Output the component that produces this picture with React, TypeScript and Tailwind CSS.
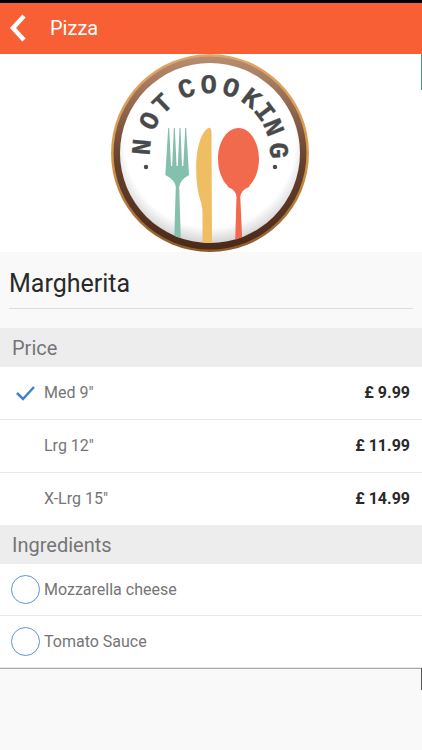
const sizes = [
  { id: "med", label: 'Med 9"', price: "£ 9.99" },
  { id: "lrg", label: 'Lrg 12"', price: "£ 11.99" },
  { id: "xlrg", label: 'X-Lrg 15"', price: "£ 14.99" },
];

const ingredients = ["Mozzarella cheese", "Tomato Sauce"];

// letters around the badge, with their angle in degrees from the top
const badgeLetters = [
  { char: "N", angle: -85 },
  { char: "O", angle: -62 },
  { char: "T", angle: -44 },
  { char: "C", angle: -20 },
  { char: "O", angle: -1 },
  { char: "O", angle: 18 },
  { char: "K", angle: 37 },
  { char: "I", angle: 53 },
  { char: "N", angle: 68 },
  { char: "G", angle: 88 },
];

function Logo() {
  return (
    <svg viewBox="0 0 198 198" className="w-[198px] h-[198px]" role="img" aria-label="Not Cooking">
      <defs>
        <linearGradient id="rim" x1="0" y1="0" x2="0" y2="1">
          <stop offset="0" stopColor="#b98d70" />
          <stop offset="0.25" stopColor="#94694f" />
          <stop offset="0.55" stopColor="#65402c" />
          <stop offset="1" stopColor="#4c2a19" />
        </linearGradient>
        <linearGradient id="edge" x1="0" y1="0" x2="0" y2="1">
          <stop offset="0" stopColor="#e0a568" />
          <stop offset="0.5" stopColor="#d99b4c" />
          <stop offset="1" stopColor="#8a5a2c" />
        </linearGradient>
        <radialGradient id="plate" cx="0.5" cy="0.44" r="0.57">
          <stop offset="0" stopColor="#ffffff" />
          <stop offset="0.83" stopColor="#ffffff" />
          <stop offset="1" stopColor="#cfcfcf" />
        </radialGradient>
        <clipPath id="inside">
          <circle cx="99" cy="99" r="90" />
        </clipPath>
      </defs>
      <circle cx="99" cy="99" r="99" fill="url(#edge)" />
      <circle cx="99" cy="99" r="96.5" fill="url(#rim)" />
      <circle cx="99" cy="99" r="90" fill="url(#plate)" />
      <g clipPath="url(#inside)">
        <path
          d="M57.2 74 H58.2 L60 112 H61.2 L62.8 74 H63.8 L65.6 112 H66.8 L68.5 74 H69.5 L71 112 H72.3 L74.2 74 H75.2 L78 121 Q69 126 68.2 133 L70 192 H63 L64.8 133 Q64 126 54.3 121 Z"
          fill="#85bfad"
        />
        <path d="M97 74 Q100.5 73 100.5 79 L101 192 H91.5 V158 Q91.5 153 89 145 C83 126 83 84 97 74 Z" fill="#f0be62" />
        <path
          d="M127.3 74 C139 74 148 88 148 105 C148 116 144 126 139 131 L138 133 Q130 136 129.3 143 L131.5 192 H124 L125.5 143 Q125 136 117 133 L116 131 C111 126 107 116 107 105 C107 88 116 74 127.3 74 Z"
          fill="#f26a4d"
        />
      </g>
      <g
        className="font-['Liberation_Mono',monospace] font-bold text-[27px]"
        fill="#47494b"
        stroke="#47494b"
        strokeWidth="0.3"
        textAnchor="middle"
      >
        {badgeLetters.map(({ char, angle }) => (
          <text key={angle} x="99" y="39" transform={`rotate(${angle} 99 99)`}>
            {char}
          </text>
        ))}
      </g>
      <circle cx="35" cy="113" r="2.2" fill="#47494b" />
      <circle cx="164" cy="113" r="2.2" fill="#47494b" />
    </svg>
  );
}

function SectionHeader({ title }: { title: string }) {
  return (
    <h2 className="h-[39px] px-3 flex items-center bg-[#ededed] text-xl text-[#757575]">{title}</h2>
  );
}

export default function App() {
  return (
    <div className="min-h-screen bg-[#f9f9f9] font-[Roboto,sans-serif]">
      {/* Top bar */}
      <header className="flex items-center gap-5 h-[54px] px-2 pb-0.5 border-t-3 border-black bg-[#f95f35] text-white">
        <button type="button" aria-label="Back">
          <svg viewBox="0 0 22 28" className="w-[22px] h-7" fill="none" stroke="currentColor" strokeWidth="4.5">
            <path d="M16 2 L5 14 L16 26" />
          </svg>
        </button>
        <h1 className="text-xl">Pizza</h1>
      </header>

      <main>
        {/* Picture, with the next slide showing at the right */}
        <div className="relative flex justify-center pr-0.5 bg-white">
          <Logo />
          <span className="absolute right-0 top-0 w-px h-9 bg-[#3d9b7c]" />
        </div>

        <div className="px-[9px] pb-[19px]">
          <h2 className="pt-[14px] pb-1.5 border-b border-[#dcdcdc] text-[25px] leading-9 text-[#2a2a2a]">Margherita</h2>
        </div>

        <SectionHeader title="Price" />
        <ul className="bg-white divide-y divide-[#e9e9e9]">
          {sizes.map(({ id, label, price }) => (
            <li key={id}>
              <label className="flex items-center h-[52px] px-3 text-[#757575]">
                <input type="radio" name="size" value={id} defaultChecked={id === "med"} className="peer appearance-none" />
                <svg
                  viewBox="0 0 32 24"
                  className="w-8 h-6 invisible peer-checked:visible"
                  fill="none"
                  stroke="#4380cf"
                  strokeWidth="2.5"
                >
                  <path d="M5 12 L11 18 L22 6" />
                </svg>
                <span className="flex-1">{label}</span>
                <span className="font-bold text-[#2a2a2a]">{price}</span>
              </label>
            </li>
          ))}
        </ul>

        <SectionHeader title="Ingredients" />
        <ul className="relative bg-white border-b border-[#a8a8a8] divide-y divide-[#e9e9e9]">
          {ingredients.map((name) => (
            <li key={name}>
              <label className="flex items-center gap-1 h-[51px] px-[11px] text-[#757575]">
                <input
                  type="checkbox"
                  className="appearance-none w-[29px] h-[29px] rounded-full border border-[#5b93dc] checked:bg-[#5b93dc]"
                />
                {name}
              </label>
            </li>
          ))}
          <li aria-hidden="true" className="absolute right-0 top-full w-px h-[22px] bg-[#555555]" />
        </ul>
      </main>
    </div>
  );
}
